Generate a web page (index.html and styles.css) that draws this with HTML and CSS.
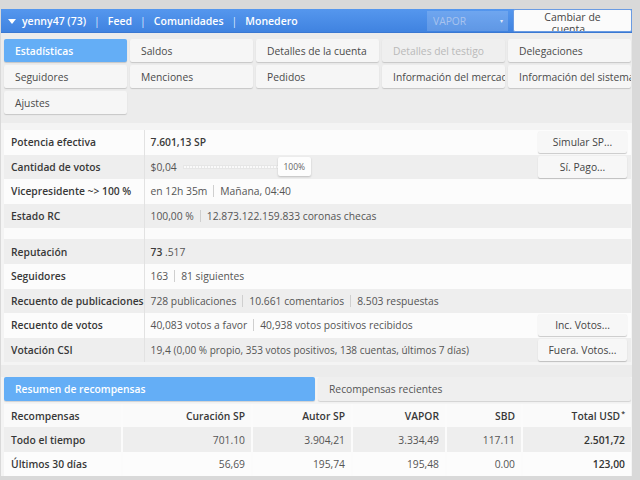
FILE: index.html
```html
<!DOCTYPE html>
<html lang="es">
<head>
<meta charset="utf-8">
<title>Monedero</title>
<link rel="stylesheet" href="styles.css">
</head>
<body>
<div class="page">
  <header class="topbar">
    <nav class="menu">
      <span class="caret"></span>
      <span class="item">yenny47 (73)</span><span class="sep">|</span>
      <span class="item">Feed</span><span class="sep">|</span>
      <span class="item">Comunidades</span><span class="sep">|</span>
      <span class="item">Monedero</span>
    </nav>
    <div class="select"><span>VAPOR</span><span class="arrow">&#9662;</span></div>
    <button class="switch">Cambiar de cuenta...</button>
  </header>

  <div class="tabs">
    <div class="tab active">Estadísticas</div>
    <div class="tab">Saldos</div>
    <div class="tab">Detalles de la cuenta</div>
    <div class="tab disabled">Detalles del testigo</div>
    <div class="tab">Delegaciones</div>
    <div class="tab">Seguidores</div>
    <div class="tab">Menciones</div>
    <div class="tab">Pedidos</div>
    <div class="tab">Información del mercado</div>
    <div class="tab">Información del sistema</div>
    <div class="tab">Ajustes</div>
  </div>

  <section class="stats">
    <table class="stable">
      <tr class="light">
        <th>Potencia efectiva</th>
        <td><div class="cell"><b>7.601,13 SP</b><button class="btn">Simular SP...</button></div></td>
      </tr>
      <tr class="dark">
        <th>Cantidad de votos</th>
        <td><div class="cell"><span>$0,04</span><div class="slider"><span class="knob">100%</span></div><button class="btn">Sí. Pago...</button></div></td>
      </tr>
      <tr class="light">
        <th>Vicepresidente ~&gt; 100 %</th>
        <td><div class="cell"><span>en 12h 35m</span><i class="bar"></i><span>Mañana, 04:40</span></div></td>
      </tr>
      <tr class="dark">
        <th>Estado RC</th>
        <td><div class="cell"><span>100,00 %</span><i class="bar"></i><span>12.873.122.159.833 coronas checas</span></div></td>
      </tr>
      <tr class="spacer"><th></th><td></td></tr>
      <tr class="dark">
        <th>Reputación</th>
        <td><div class="cell"><span><b>73</b> .517</span></div></td>
      </tr>
      <tr class="light">
        <th>Seguidores</th>
        <td><div class="cell"><span>163</span><i class="bar"></i><span>81 siguientes</span></div></td>
      </tr>
      <tr class="dark">
        <th>Recuento de publicaciones</th>
        <td><div class="cell"><span>728 publicaciones</span><i class="bar"></i><span>10.661 comentarios</span><i class="bar"></i><span>8.503 respuestas</span></div></td>
      </tr>
      <tr class="light">
        <th>Recuento de votos</th>
        <td><div class="cell"><span>40,083 votos a favor</span><i class="bar"></i><span>40,938 votos positivos recibidos</span><button class="btn">Inc. Votos...</button></div></td>
      </tr>
      <tr class="dark">
        <th>Votación CSI</th>
        <td><div class="cell"><span>19,4 <small>(0,00 % propio, 353 votos positivos, 138 cuentas, últimos 7 días)</small></span><button class="btn">Fuera. Votos...</button></div></td>
      </tr>
    </table>
  </section>

  <section class="rewards">
    <div class="rtabs">
      <div class="rtab active">Resumen de recompensas</div>
      <div class="rtab">Recompensas recientes</div>
    </div>
    <table class="rtable">
      <tr class="head">
        <th class="first">Recompensas</th>
        <th>Curación SP</th>
        <th>Autor SP</th>
        <th>VAPOR</th>
        <th>SBD</th>
        <th>Total USD<sup>*</sup></th>
      </tr>
      <tr class="dark">
        <th class="first">Todo el tiempo</th>
        <td>701.10</td>
        <td>3.904,21</td>
        <td>3.334,49</td>
        <td>117.11</td>
        <td class="total">2.501,72</td>
      </tr>
      <tr class="light">
        <th class="first">Últimos 30 días</th>
        <td>56,69</td>
        <td>195,74</td>
        <td>195,48</td>
        <td>0.00</td>
        <td class="total">123,00</td>
      </tr>
    </table>
  </section>
</div>
</body>
</html>
```

FILE: styles.css
```css
* { box-sizing: border-box; }

html, body {
  margin: 0;
  padding: 0;
  background: #d9d9d9;
  font-family: "Open Sans", "DejaVu Sans", sans-serif;
  font-size: 10.3px;
  color: #555;
  overflow: hidden;
}

.page {
  width: 631px;
  margin: 9px 0 0 1px;
  background: #ececec;
}

/* top bar */
.topbar {
  height: 24px;
  display: flex;
  align-items: center;
  background: linear-gradient(#5597ee, #4083e0);
  border-bottom: 1px solid #3a78d2;
}

.menu {
  display: flex;
  align-items: center;
  padding-left: 7px;
  color: #fff;
  font-weight: 600;
  font-size: 10.5px;
  flex: 1;
}

.caret {
  width: 0;
  height: 0;
  border-left: 4px solid transparent;
  border-right: 4px solid transparent;
  border-top: 5px solid #fff;
  margin-right: 6px;
  margin-top: 1px;
}

.sep {
  margin: 0 8px;
  font-weight: 400;
  color: #d7e6fb;
}

.select {
  width: 81px;
  height: 20px;
  display: flex;
  align-items: center;
  justify-content: space-between;
  padding: 0 5px 0 6px;
  background: rgba(255, 255, 255, 0.16);
  color: #a8c3ee;
  font-size: 10.3px;
  margin-right: 5px;
}

.select .arrow {
  font-size: 6px;
  color: #dfe9fa;
}

.switch {
  width: 119px;
  height: 23px;
  padding: 1px 20px 0;
  background: #fbfbfb;
  border: 1px solid #6a9be2;
  border-radius: 2px;
  font-family: inherit;
  font-size: 10.5px;
  line-height: 12px;
  color: #444;
  overflow: hidden;
  align-self: flex-start;
  display: block;
  text-align: center;
}

/* tabs */
.tabs {
  display: grid;
  grid-template-columns: repeat(5, 123px);
  grid-auto-rows: 23px;
  gap: 3px;
  padding: 6px 1px 9px 3px;
}

.tab {
  background: #f6f6f6;
  border-radius: 2px;
  box-shadow: 0 1px 1px rgba(0, 0, 0, 0.16);
  padding-left: 11px;
  line-height: 24px;
  white-space: nowrap;
  overflow: hidden;
  color: #4a4a4a;
}

.tab.active {
  background: #64aef6;
  color: #fff;
  font-weight: 600;
}

.tab.disabled {
  background: #efefef;
  color: #b9b9b9;
}

/* stats */
.stats {
  background: #f4f4f4;
  padding: 7px 1px 3px 3px;
}

.stable {
  width: 627px;
  border-collapse: collapse;
  table-layout: fixed;
}

.stable tr { height: 24.6px; }
.stable tr.spacer { height: 11px; background: #fbfbfb; }

.stable th {
  width: 140px;
  text-align: left;
  font-weight: 600;
  color: #383838;
  padding: 0 0 0 7px;
  border-right: 1px solid #e2e2e2;
  white-space: nowrap;
}

.stable td {
  padding: 0 4px 0 6px;
}

tr.light { background: #fcfcfc; }
tr.dark { background: #eeeeee; }

.cell {
  display: flex;
  align-items: center;
  white-space: nowrap;
}

.cell b { font-weight: 600; color: #3a3a3a; }
.cell small { font-size: 10px; }

.bar {
  display: inline-block;
  width: 1px;
  height: 12px;
  background: #cfcfcf;
  margin: 0 6px;
}

.btn {
  margin-left: auto;
  width: 89px;
  height: 22px;
  background: #f7f7f7;
  border: none;
  border-radius: 2px;
  box-shadow: 0 1px 1px rgba(0, 0, 0, 0.2);
  font-family: inherit;
  font-size: 10.3px;
  color: #444;
  padding: 0;
}

.slider {
  position: relative;
  width: 126px;
  height: 4px;
  margin-left: 6px;
  background: repeating-linear-gradient(90deg, #fafafa 0 2px, #e8e8e8 2px 3px);
  border: 1px solid #e6e6e6;
}

.knob {
  position: absolute;
  right: -3px;
  top: -9px;
  width: 33px;
  height: 19px;
  background: #fdfdfd;
  border-radius: 2px;
  box-shadow: 0 1px 2px rgba(0, 0, 0, 0.2);
  font-size: 8.5px;
  line-height: 19px;
  text-align: center;
  color: #666;
}

/* rewards */
.rewards {
  margin-top: 12px;
  background: #f4f4f4;
  padding: 0 1px 0 3px;
}

.rtabs {
  display: flex;
  gap: 3px;
  padding-bottom: 3px;
}

.rtab {
  height: 24px;
  line-height: 24px;
  padding-left: 11px;
  background: #efefef;
  border-radius: 2px;
  box-shadow: 0 1px 1px rgba(0, 0, 0, 0.14);
  color: #555;
}

.rtab.active {
  width: 311px;
  background: #64aef6;
  color: #fff;
  font-weight: 600;
}

.rtab:not(.active) { flex: 1; }

.rtable {
  width: 627px;
  border-collapse: collapse;
}

.rtable tr { height: 24.5px; }
.rtable tr.head { background: #fafafa; height: 23px; }

.rtable th,
.rtable td {
  text-align: right;
  padding: 0 6px 0 0;
  border-left: 2px solid #fbfbfb;
  white-space: nowrap;
}

.rtable th { font-weight: 600; color: #383838; }
.rtable td { color: #555; }

.rtable .first {
  text-align: left;
  padding-left: 7px;
  border-left: none;
}

.rtable th:nth-child(1) { width: 118px; }
.rtable th:nth-child(2) { width: 130px; }
.rtable th:nth-child(3) { width: 100px; }
.rtable th:nth-child(4) { width: 94px; }
.rtable th:nth-child(5) { width: 76px; }

.rtable td.total { font-weight: 600; color: #333; }

.rtable sup {
  font-size: 7px;
  vertical-align: top;
  margin-left: 1px;
}
```
